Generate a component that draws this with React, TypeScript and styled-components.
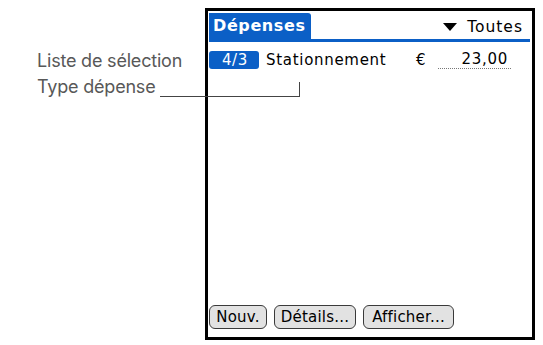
import styled, { createGlobalStyle } from "styled-components";

const GlobalStyle = createGlobalStyle`
  html, body {
    margin: 0;
    padding: 0;
    background: #ffffff;
  }
`;

const Page = styled.div`
  width: 543px;
  height: 345px;
  position: relative;
  display: flex;
  align-items: flex-start;
  overflow: hidden;
`;

const Notes = styled.div`
  width: 205px;
  padding: 49px 0 0 37px;
  box-sizing: border-box;
  display: flex;
  flex-direction: column;
  gap: 3px;
  font-family: "Inter", "Liberation Sans", sans-serif;
  font-size: 18px;
  color: #585858;
  line-height: 23px;
`;

const Note = styled.div`
  white-space: nowrap;
  letter-spacing: -0.2px;
`;

const Leader = styled.div`
  position: absolute;
  left: 160px;
  top: 82px;
  width: 140px;
  height: 15px;
  border-right: 1.5px solid #444444;
  border-bottom: 1.5px solid #444444;
  box-sizing: border-box;
`;

const Device = styled.div`
  margin-top: 8px;
  width: 330px;
  height: 332px;
  border: 3px solid #000000;
  box-sizing: border-box;
  display: flex;
  flex-direction: column;
  padding: 1px 2px 8px 1px;
  font-family: "DejaVu Sans", sans-serif;
  color: #000000;
`;

const TitleBar = styled.div`
  display: flex;
  align-items: flex-end;
  justify-content: space-between;
  border-bottom: 3px solid #0b5fc6;
  height: 26px;
  margin-top: 1px;
`;

const Tab = styled.div`
  background: #0b5fc6;
  color: #ffffff;
  font-weight: bold;
  font-size: 16px;
  height: 26px;
  line-height: 26px;
  padding: 0 5px 0 4px;
  border-top-right-radius: 3px;
  letter-spacing: 0.6px;
`;

const Category = styled.div`
  display: flex;
  align-items: center;
  gap: 10px;
  font-size: 15.5px;
  letter-spacing: 1px;
  padding-right: 7px;
  height: 24px;
`;

const Arrow = styled.span`
  width: 0;
  height: 0;
  border-left: 7px solid transparent;
  border-right: 7px solid transparent;
  border-top: 8px solid #000000;
`;

const Row = styled.div`
  display: flex;
  align-items: center;
  margin-top: 8px;
  height: 19px;
  font-size: 15px;
  letter-spacing: 0.7px;
`;

const DateBox = styled.div`
  background: #0b5fc6;
  color: #ffffff;
  width: 50px;
  height: 18px;
  line-height: 18px;
  border-radius: 3px;
  text-align: center;
  box-sizing: border-box;
  padding-left: 2px;
`;

const Kind = styled.div`
  margin-left: 7px;
  width: 150px;
`;

const Currency = styled.div`
  width: 22px;
`;

const Amount = styled.div`
  width: 73px;
  text-align: right;
  padding-right: 3px;
  box-sizing: border-box;
  border-bottom: 1.5px dotted #777777;
  line-height: 17px;
`;

const Spacer = styled.div`
  flex: 1;
`;

const Buttons = styled.div`
  display: flex;
  gap: 7px;
`;

const Button = styled.div<{ $w: number }>`
  width: ${(p) => p.$w}px;
  height: 24px;
  box-sizing: border-box;
  border: 1.5px solid #3a3a3a;
  border-radius: 6px;
  background: #e2e2e2;
  display: flex;
  align-items: center;
  justify-content: center;
  font-size: 15px;
  letter-spacing: 0.2px;
`;

export default function App() {
  return (
    <Page>
      <GlobalStyle />
      <Notes>
        <Note>Liste de sélection</Note>
        <Note>Type dépense</Note>
      </Notes>
      <Device>
        <TitleBar>
          <Tab>Dépenses</Tab>
          <Category>
            <Arrow />
            Toutes
          </Category>
        </TitleBar>
        <Row>
          <DateBox>4/3</DateBox>
          <Kind>Stationnement</Kind>
          <Currency>€</Currency>
          <Amount>23,00</Amount>
        </Row>
        <Spacer />
        <Buttons>
          <Button $w={58}>Nouv.</Button>
          <Button $w={82}>Détails...</Button>
          <Button $w={91}>Afficher...</Button>
        </Buttons>
      </Device>
      <Leader />
    </Page>
  );
}
